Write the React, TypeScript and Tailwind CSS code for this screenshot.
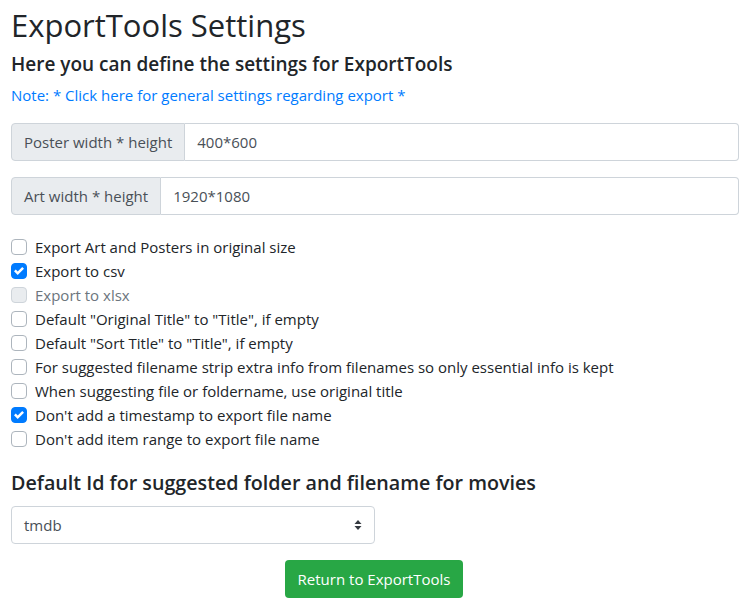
import React from "react";

const options: { label: string; checked?: boolean; disabled?: boolean }[] = [
  { label: "Export Art and Posters in original size" },
  { label: "Export to csv", checked: true },
  { label: "Export to xlsx", disabled: true },
  { label: 'Default "Original Title" to "Title", if empty' },
  { label: 'Default "Sort Title" to "Title", if empty' },
  { label: "For suggested filename strip extra info from filenames so only essential info is kept" },
  { label: "When suggesting file or foldername, use original title" },
  { label: "Don't add a timestamp to export file name", checked: true },
  { label: "Don't add item range to export file name" },
];

function Check({ checked, disabled }: { checked?: boolean; disabled?: boolean }) {
  if (checked) {
    return (
      <span className="w-4 h-4 rounded-[4px] bg-[#007bff] border border-[#007bff] flex items-center justify-center shrink-0">
        <svg width="10" height="10" viewBox="0 0 8 8">
          <path fill="#fff" d="M6.564.75l-3.59 3.612-1.538-1.55L0 4.26l2.974 2.99L8 2.193z" />
        </svg>
      </span>
    );
  }
  return (
    <span
      className={
        "w-4 h-4 rounded-[4px] border shrink-0 " +
        (disabled ? "bg-[#e9ecef] border-[#ced4da]" : "bg-white border-[#adb5bd]")
      }
    />
  );
}

function InputGroup({ label, value }: { label: string; value: string }) {
  return (
    <div className="flex h-[38px] w-full">
      <span className="flex items-center px-3 bg-[#e9ecef] border border-[#ced4da] rounded-l-[4px] text-[#495057] whitespace-nowrap">
        {label}
      </span>
      <span className="flex-1 flex items-center px-3 border border-l-0 border-[#ced4da] rounded-r-[4px] text-[#495057] bg-white">
        {value}
      </span>
    </div>
  );
}

export default function App() {
  return (
    <div
      className="bg-white text-[#212529] text-[15px] leading-6 pl-[11px] pr-[4px] pt-[6px] w-[743px] h-[606px] overflow-hidden"
      style={{ fontFamily: '"Segoe UI", "Open Sans", sans-serif' }}
    >
      <h1 className="text-[31px] leading-[38px] font-medium mb-2">ExportTools Settings</h1>
      <h2 className="text-[19px] leading-6 font-semibold mb-[7px]">Here you can define the settings for ExportTools</h2>
      <div className="text-[#007bff] text-[15px] leading-6 mb-4">
        Note: * Click here for general settings regarding export *
      </div>
      <div className="flex flex-col gap-4">
        <InputGroup label="Poster width * height" value="400*600" />
        <InputGroup label="Art width * height" value="1920*1080" />
      </div>
      <div className="mt-5 flex flex-col">
        {options.map((o) => (
          <label key={o.label} className="flex items-center gap-2 h-6">
            <Check checked={o.checked} disabled={o.disabled} />
            <span className={o.disabled ? "text-[#6c757d]" : ""}>{o.label}</span>
          </label>
        ))}
      </div>
      <h3 className="mt-5 text-[19.7px] leading-6 font-semibold">
        Default Id for suggested folder and filename for movies
      </h3>
      <div className="mt-[11px] w-[364px] h-[38px] border border-[#ced4da] rounded-[4px] flex items-center justify-between pl-3 pr-[12px] text-[#495057]">
        <span>tmdb</span>
        <svg width="8" height="10" viewBox="0 0 8 10">
          <path d="M4 0 L7.5 4 H0.5 Z M4 10 L0.5 6 H7.5 Z" fill="#343a40" />
        </svg>
      </div>
      <div className="flex justify-center mt-4 pr-[2px]">
        <button className="bg-[#28a745] text-white rounded-[4px] h-[38px] px-3 w-[178px]">
          Return to ExportTools
        </button>
      </div>
    </div>
  );
}
